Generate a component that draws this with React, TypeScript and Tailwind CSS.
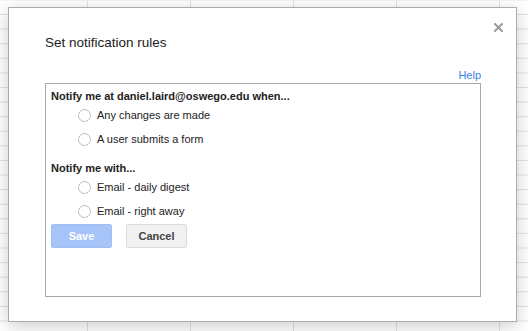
import React from "react";

function Radio({ label }: { label: string }) {
  return (
    <div className="flex h-[24px] items-center pl-[27px]">
      <span className="h-[13px] w-[13px] rounded-full border border-[#bdbdbd] bg-white" />
      <span className="ml-[6px] text-[11px] leading-[14px] text-[#222]">{label}</span>
    </div>
  );
}

export default function App() {
  return (
    <div
      className="relative h-[331px] w-[528px] overflow-hidden bg-white bg-[linear-gradient(to_right,#e2e2e2_1px,transparent_1px),linear-gradient(to_bottom,#e2e2e2_1px,transparent_1px)] bg-[size:103px_14.6px] bg-[position:-16px_-0.6px] pl-[8px] pt-[7px]"
      style={{ fontFamily: '"Liberation Sans", Arial, sans-serif' }}
    >
      <div className="relative flex h-[315px] w-[509px] flex-col border border-[#acacac] bg-white px-[35px] pl-[36px] shadow-[0_4px_16px_rgba(0,0,0,0.2)]">
        <button className="absolute right-[13px] top-[15px] h-[9px] w-[9px]">
          <svg width="9" height="9" viewBox="0 0 9 9">
            <path d="M1 1L8 8M8 1L1 8" stroke="#9a9a9a" strokeWidth="2" strokeLinecap="square" />
          </svg>
        </button>
        <div className="mt-[27px] h-[16px] text-[13.5px] leading-[16px] text-[#222]">Set notification rules</div>
        <div className="mt-[17px] flex h-[14px] justify-end text-[11px] leading-[14px] text-[#3b7de6]">Help</div>
        <div className="mt-[1px] flex h-[214px] flex-col border border-[#a9a9a9] pl-[5px] pt-[5px]">
          <div className="h-[14px] text-[11px] font-bold leading-[14px] text-[#222]">
            Notify me at daniel.laird@oswego.edu when...
          </div>
          <Radio label="Any changes are made" />
          <Radio label="A user submits a form" />
          <div className="mt-[10px] h-[14px] text-[11px] font-bold leading-[14px] text-[#222]">Notify me with...</div>
          <Radio label="Email - daily digest" />
          <Radio label="Email - right away" />
          <div className="mt-[1px] flex gap-[14px]">
            <button className="h-[24px] w-[61px] rounded-[2px] border border-[#a0bff3] bg-[#a6c4f7] text-[11px] font-bold text-white">
              Save
            </button>
            <button className="h-[24px] w-[61px] rounded-[2px] border border-[#dcdcdc] bg-[#f1f1f1] text-[11px] font-bold text-[#444]">
              Cancel
            </button>
          </div>
        </div>
      </div>
    </div>
  );
}
